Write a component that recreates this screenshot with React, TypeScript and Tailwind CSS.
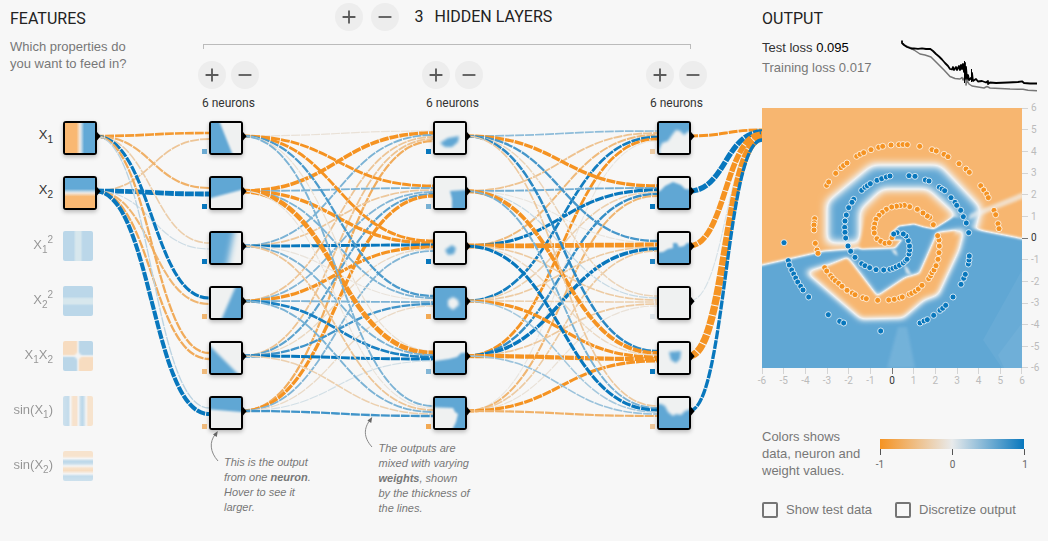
import React from "react";

type Point = [number, number];

const ROW_Y = [136, 191, 246, 301, 356, 411];

/* Rows are source nodes, columns are destination nodes. */
const INPUT_WEIGHTS = [
  [-0.92, -0.65, -0.32, 1.2, -0.72, 0.2],
  [-0.42, 2.1, 0.12, -0.6, -0.72, 1.7],
];

const HIDDEN_WEIGHTS_1 = [
  [-0.1, -1.0, -1.05, 0.7, -0.12, 0.48],
  [-1.5, 0.48, -1.3, 0.48, -2.1, -0.08],
  [0.48, -0.4, 1.1, -0.08, 0.48, -0.42],
  [-0.42, 0.45, -1.25, 0.48, 0.92, 0.48],
  [-0.45, 0.62, -0.2, 0.75, 1.1, -0.3],
  [-0.7, -1.3, 0.45, -0.18, 0.1, 0.75],
];

const HIDDEN_WEIGHTS_2 = [
  [0.4, -1.3, 0.72, -0.25, 0.85, -0.38],
  [-0.45, 0.52, -0.06, 0.15, -1.6, 0.5],
  [-0.55, 1.2, -2.1, -0.36, -0.2, 1.2],
  [0.95, -0.3, -0.36, -0.3, -1.2, 0.3],
  [-1.0, 0.8, 1.4, -0.38, -1.8, 0.35],
  [-0.06, -0.6, -0.36, -0.1, -1.2, -0.65],
];

const OUTPUT_WEIGHTS = [[-1.1], [2.4], [-2.5], [0.08], [-3.5], [1.3]];

function weightColor(w: number) {
  const t = Math.min(1, Math.abs(w));
  const from = [232, 234, 235];
  const to = w < 0 ? [245, 147, 34] : [8, 119, 189];
  const c = from.map((v, i) => Math.round(v + (to[i] - v) * t));
  return `rgb(${c[0]},${c[1]},${c[2]})`;
}

function LinkGroup({ x1, x2, weights, targets }: { x1: number; x2: number; weights: number[][]; targets: number[] }) {
  const n = weights.length;
  const mid = (x1 + x2) / 2;
  return (
    <g fill="none" strokeDasharray="9 1">
      {targets.map((ty, j) =>
        weights.map((row, i) => {
          const y1 = ROW_Y[i];
          const y2 = ty + ((i - (n - 1) / 2) / n) * 12;
          return (
            <path
              key={`${i}-${j}`}
              d={`M${x1},${y1}C${mid},${y1} ${mid},${y2} ${x2},${y2}`}
              stroke={weightColor(row[j])}
              strokeWidth={1 + 1.8 * Math.abs(row[j])}
            />
          );
        })
      )}
    </g>
  );
}

function Links() {
  return (
    <svg className="pointer-events-none absolute inset-0" width="762" height="541">
      <LinkGroup x1={95} x2={209} weights={INPUT_WEIGHTS} targets={ROW_Y} />
      <LinkGroup x1={241} x2={433} weights={HIDDEN_WEIGHTS_1} targets={ROW_Y} />
      <LinkGroup x1={465} x2={657} weights={HIDDEN_WEIGHTS_2} targets={ROW_Y} />
      <LinkGroup x1={689} x2={762} weights={OUTPUT_WEIGHTS} targets={[135]} />
    </svg>
  );
}

/* Grey levels 0..1 are mapped onto orange, off-white and blue. */
function Filters() {
  return (
    <svg className="absolute" width="0" height="0">
      <defs>
        <filter id="scale" x="0" y="0" width="100%" height="100%" colorInterpolationFilters="sRGB">
          <feComponentTransfer>
            <feFuncR type="table" tableValues="0.97 0.941 0.38" />
            <feFuncG type="table" tableValues="0.716 0.949 0.655" />
            <feFuncB type="table" tableValues="0.44 0.949 0.832" />
          </feComponentTransfer>
        </filter>
        {[1, 1.6, 3, 5].map((s, i) => (
          <filter key={s} id={`soft${i}`} x="-40%" y="-40%" width="180%" height="180%" colorInterpolationFilters="sRGB">
            <feGaussianBlur stdDeviation={s} />
          </filter>
        ))}
      </defs>
    </svg>
  );
}

type Shape = { d: string; soft: number; v?: string };
type Neuron = { base: string; shapes: Shape[]; bias: number };

const MID = "#808080";

const LAYERS: Neuron[][] = [
  [
    { base: MID, bias: 0.55, shapes: [{ d: "M-9,-9H6L9,0L21,30L25,39H-9Z", soft: 0 }] },
    { base: MID, bias: 1, shapes: [{ d: "M-9,-9H39V9L30,12L0,20L-9,23Z", soft: 0 }] },
    { base: MID, bias: 1, shapes: [{ d: "M-9,-9H25L23,0L17,30L15,39H-9Z", soft: 2 }] },
    { base: MID, bias: -0.6, shapes: [{ d: "M39,-9H27L24,0L11,30L7,39H39Z", soft: 1 }] },
    { base: MID, bias: -0.55, shapes: [{ d: "M-9,-5L0,4L26,30L35,39H-9Z", soft: 1 }] },
    { base: MID, bias: -0.55, shapes: [{ d: "M-9,-9H39V15L30,14L0,11.5L-9,11Z", soft: 0 }] },
  ],
  [
    { base: MID, bias: 1, shapes: [{ d: "M5,20L13,15L24,13L23,19L17,24L10,24Z", soft: 1 }] },
    { base: MID, bias: 0.5, shapes: [{ d: "M15,13L30,12H39V39H17L17,21Z", soft: 0 }] },
    { base: MID, bias: 1, shapes: [{ d: "M10,17L17,12L21,15L19,21L13,22Z", soft: 1 }] },
    { base: "#fff", bias: -0.75, shapes: [{ d: "M13,12L18,9L23,12L24,17L18,22L13,18Z", soft: 1, v: MID }] },
    { base: MID, bias: 0.45, shapes: [{ d: "M-9,18L0,18L14,16L22,14L26,10L39,9V39H-9Z", soft: 0 }] },
    { base: "#fff", bias: -0.75, shapes: [{ d: "M-9,9L18,10L20,14L23,16L21,24L18,30L15,39H-9Z", soft: 0, v: MID }] },
  ],
  [
    { base: "#fff", bias: -0.35, shapes: [{ d: "M0,27L3,20L9,18L13,12L17,7L21,8L25,12L30,8L39,8V39H3Z", soft: 1, v: MID }] },
    { base: MID, bias: 1, shapes: [{ d: "M-9,14L1,13L6,8L14,4L22,7L26,11L39,12V39H-9Z", soft: 0 }] },
    { base: MID, bias: 0.9, shapes: [{ d: "M-9,20L4,19L9,16L14,15L14,10L18,10L20,14L25,13L28,10H39V39H-9Z", soft: 0 }] },
    { base: MID, bias: 0.05, shapes: [] },
    { base: MID, bias: 1, shapes: [{ d: "M10,9L22,8L21,16L17,20L12,17Z", soft: 1 }] },
    { base: MID, bias: -0.4, shapes: [{ d: "M-9,6H2L6,8L9,14L14,18L17,16L22,17L26,13L39,9V39H-9Z", soft: 1 }] },
  ],
];

function NodeCanvas({ neuron }: { neuron: Neuron }) {
  return (
    <svg width="30" height="30" viewBox="0 0 30 30" className="block">
      <g filter="url(#scale)">
        <rect width="30" height="30" fill={neuron.base} />
        <svg width="30" height="30" overflow="hidden">
          {neuron.shapes.map((s) => (
            <path key={s.d} d={s.d} fill={s.v ?? "#fff"} filter={`url(#soft${s.soft})`} />
          ))}
        </svg>
      </g>
    </svg>
  );
}

function NodeBox({ children }: { children: React.ReactNode }) {
  return (
    <div className="relative h-[34px] w-[34px] rounded-[3px] border-2 border-black bg-black shadow-[0_2px_4px_rgba(0,0,0,0.25)]">
      {children}
      <svg className="absolute top-[9px] left-[31px]" width="5" height="9" viewBox="0 0 5 9">
        <path d="M0,0H1L4.6,4.3L1,8.5H0Z" fill="#000" />
      </svg>
    </div>
  );
}

const BLUE = "bg-[#61a8d5]";
const FEATURES: { label: React.ReactNode; active?: boolean; fill: string }[] = [
  { label: <>X<Sub>1</Sub></>, active: true, fill: "bg-[linear-gradient(90deg,#f9b872_38%,#f0e4d8_49%,#d5e2ea_53%,#62a9d6_64%)]" },
  { label: <>X<Sub>2</Sub></>, active: true, fill: "bg-[linear-gradient(180deg,#62a9d6_36%,#d5e2ea_47%,#f0e4d8_51%,#f9b872_62%)]" },
  { label: <>X<Sub>1</Sub><Sup>2</Sup></>, fill: "bg-[linear-gradient(90deg,#62a9d6_35%,#a9d0e0_43%,#a9d0e0_58%,#62a9d6_66%)]" },
  { label: <>X<Sub>2</Sub><Sup>2</Sup></>, fill: "bg-[linear-gradient(180deg,#62a9d6_35%,#a9d0e0_43%,#a9d0e0_58%,#62a9d6_66%)]" },
  { label: <>X<Sub>1</Sub>X<Sub>2</Sub></>, fill: BLUE },
  { label: <>sin(X<Sub>1</Sub>)</>, fill: "bg-[linear-gradient(90deg,#8fc0df_0%,#79b4da_18%,#f0f2f2_25%,#f9c58e_33%,#f9c590_45%,#f0f2f2_51%,#8fc0df_58%,#62a9d6_64%,#8fc0df_70%,#f0f2f2_77%,#f9c690_84%,#f9c690_100%)]" },
  { label: <>sin(X<Sub>2</Sub>)</>, fill: "bg-[linear-gradient(180deg,#f9c690_0%,#f9c690_17%,#f0f2f2_25%,#8fc0df_31%,#62a9d6_36%,#8fc0df_43%,#f0f2f2_50%,#f9c58e_57%,#f9b872_65%,#f0f2f2_76%,#79b4da_84%,#8fc0df_100%)]" },
];

function Sub({ children }: { children: React.ReactNode }) {
  return <span className="relative top-[4px] text-[10px]">{children}</span>;
}

function Sup({ children }: { children: React.ReactNode }) {
  return <span className="relative top-[-6px] text-[10px]">{children}</span>;
}

function RoundButton({ minus }: { minus?: boolean }) {
  return (
    <button className="flex h-7 w-7 items-center justify-center rounded-full bg-[#ededed]">
      <svg width="22" height="22" viewBox="0 0 24 24" fill="#5a5a5a">
        <path d={minus ? "M19 13H5v-2h14v2z" : "M19 13h-6v6h-2v-6H5v-2h6V5h2v6h6v2z"} />
      </svg>
    </button>
  );
}

function Features() {
  return (
    <section className="flex w-[198px] shrink-0 flex-col">
      <div className="h-[121px] pt-[9px] pl-[10px]">
        <h2 className="font-[Roboto,sans-serif] text-[16px] leading-5 text-[#222]">FEATURES</h2>
        <p className="mt-[9px] text-[13px] leading-[17px] text-[#777]">
          Which properties do
          <br />
          you want to feed in?
        </p>
      </div>
      <div className="flex flex-col gap-[21px]">
        {FEATURES.map((f, i) => (
          <div key={i} className={f.active ? "flex h-[34px] gap-[10px]" : "flex h-[34px] gap-[10px] opacity-40"}>
            <div className={f.active ? "w-[53px] pt-[4px] text-right text-[13px] leading-5 whitespace-nowrap text-[#333]" : "w-[53px] pt-[4px] text-right text-[13px] leading-5 whitespace-nowrap text-black"}>
              {f.label}
            </div>
            {f.active ? (
              <NodeBox>
                <div className={`h-[30px] w-[30px] ${f.fill}`} />
              </NodeBox>
            ) : i === 4 ? (
              <svg width="30" height="30" viewBox="0 0 30 30" className="rounded-[2px]">
                <g filter="url(#scale)">
                  <rect width="30" height="30" fill="#fff" />
                  <svg width="30" height="30" overflow="hidden">
                    <path d="M-5,-5H15V15H-5ZM15,15H35V35H15Z" fill="#000" filter="url(#soft0)" />
                    <circle cx="15" cy="15" r="3" fill="#808080" filter="url(#soft0)" />
                  </svg>
                </g>
              </svg>
            ) : (
              <div className={`h-[30px] w-[30px] rounded-[2px] ${f.fill}`} />
            )}
          </div>
        ))}
      </div>
    </section>
  );
}

function HiddenLayer({ neurons, last }: { neurons: Neuron[]; last?: boolean }) {
  return (
    <div className={last ? "w-[116px] shrink-0" : "w-[224px] shrink-0"}>
      <div className="flex gap-[5px]">
        <RoundButton />
        <RoundButton minus />
      </div>
      <div className="h-[32px] pt-[6px] pl-[4px] font-[Roboto,sans-serif] text-[12px] leading-4 text-[#333]">6 neurons</div>
      <div className="flex flex-col gap-[21px] pl-[11px]">
        {neurons.map((n, i) => (
          <NodeBox key={i}>
            <NodeCanvas neuron={n} />
            <span className="absolute top-[26px] left-[-9px] h-[5px] w-[5px]" style={{ backgroundColor: weightColor(n.bias) }} />
          </NodeBox>
        ))}
      </div>
    </div>
  );
}

function HiddenLayers() {
  return (
    <section className="flex w-[564px] shrink-0 flex-col">
      <div className="flex h-[44px] items-start pt-[3px] pl-[137px]">
        <RoundButton />
        <div className="w-[8px]" />
        <RoundButton minus />
        <div className="flex gap-[11px] pt-[4px] pl-[15.5px] font-[Roboto,sans-serif] text-[16px] leading-5 text-[#222]">
          <span>3</span>
          <h2>HIDDEN LAYERS</h2>
        </div>
      </div>
      <div className="mb-[12px] ml-[5px] h-[5px] w-[488px] border-x border-t border-[#bbb]" />
      <div className="flex">
        {LAYERS.map((neurons, i) => (
          <HiddenLayer key={i} neurons={neurons} last={i === 2} />
        ))}
      </div>
    </section>
  );
}

const ORANGE_POINTS: Point[] = [
  [64.7, 77.3], [66.7, 74], [73.7, 65.3], [79, 59.7], [81.5, 57.5], [85, 55], [94.7, 48.3], [98, 46.3], [101.7, 44.7], [109, 41.7],
  [116.7, 39.3], [120.7, 38.3], [129, 37], [137, 36.7], [141, 36.5], [145.3, 36.7], [157.7, 38.3], [170, 41.7], [174.3, 43],
  [182, 46.3], [186, 48.7], [197, 55.7], [204, 61], [207.3, 64.3], [218.7, 77.7], [221.7, 82], [224.7, 86], [226.3, 89.7],
  [232, 102.3], [233.7, 106.7], [236, 115.7], [237, 120.7], [52.7, 110.7], [52.3, 114.7], [52, 117], [52, 122], [53.3, 135.3],
  [55, 142], [56, 145.3], [62.7, 159.7], [64.7, 163], [68.7, 167.7], [70.7, 170.3], [73.3, 172.7], [76.7, 175.3], [80, 178.3],
  [85, 182.3], [90.3, 185], [93, 186.7], [101, 189.7], [104.3, 190.7], [115.7, 192.3], [126.7, 192], [132.3, 191.3],
  [137.7, 190], [140.3, 189], [147.3, 186.3], [149.7, 185.3], [153.3, 183.3], [156.3, 181], [160, 177.3], [166.7, 170.7],
  [168.7, 167.7], [170, 164.7], [172, 162], [174, 157.7], [176, 151.3], [177, 144.7], [177.3, 138], [177, 132], [175.7, 127.7],
  [171.3, 116.7], [167.7, 109.3], [165.3, 108], [161, 105], [155.3, 101.3], [147.7, 98.7], [142.3, 97.3], [138, 97.7],
  [134.5, 98.2], [129.7, 99], [124.3, 101.3], [120.3, 104.3], [117, 107.3], [114, 111.3], [112.7, 116], [112, 120.3],
  [112.3, 125], [115, 130.7], [118.7, 133.3], [123, 135.3], [127.3, 134.7], [130, 129.7],
];

const BLUE_POINTS: Point[] = [
  [99.7, 82.3], [103, 79.3], [105.3, 77.7], [108.3, 75.7], [115, 72.3], [119.7, 70.7], [124.3, 69], [128, 68], [147, 67.7],
  [153, 68.3], [163.3, 72], [167, 73], [177.3, 79.3], [180, 81], [182.7, 82.7], [189, 89.7], [193, 94.3], [194.7, 97.3],
  [198.7, 102.3], [201.3, 108.7], [204.3, 115], [206.7, 124.7], [91.7, 91.3], [90, 94.3], [86.7, 99.7], [84.3, 107], [83, 113],
  [82.7, 119.3], [83, 124.3], [83.7, 130], [86, 138], [88.7, 143.3], [93, 149.3], [99.7, 155.7], [103, 157.7], [107.7, 159.7],
  [114, 161.7], [121.7, 162], [128, 161.3], [131, 160.3], [134, 159], [137.5, 157.3], [141.3, 155], [143.5, 153], [145, 151.3],
  [147, 146], [147.7, 142], [147.5, 138], [146.3, 132.7], [144, 128], [141.3, 126], [135, 124.7], [131.7, 126], [22, 134.7],
  [26.3, 152.7], [27.3, 157], [29.7, 162], [31.7, 166], [33.7, 170], [35.7, 174], [38.7, 178.3], [41, 182], [46.7, 189],
  [66.3, 206.7], [77.7, 213.3], [81.7, 215], [118.7, 223], [158, 215], [162, 213], [165.3, 211.7], [171.7, 207.3],
  [178, 202.3], [180.7, 200.3], [183.7, 197.3], [191, 189], [199, 176.3], [201.7, 170.3], [203.3, 166.3], [206.3, 156],
  [207, 152], [207.3, 148],
];

const TICKS = [-6, -5, -4, -3, -2, -1, 0, 1, 2, 3, 4, 5, 6];

function HeatMap() {
  return (
    <svg width="286" height="284" viewBox="0 0 286 284" className="block overflow-visible">
      <svg width="260" height="260" overflow="hidden">
        <g filter="url(#scale)">
          <rect width="260" height="260" fill="#000" />
          {/* outer ring */}
          <path d="M65,150V94L110,57H178L219,100L210,135H65Z" fill="#fff" filter="url(#soft3)" />
          <path d="M208,106L262,84V90L206,112Z" fill="#808080" opacity="0.7" filter="url(#soft1)" />
          {/* inside of the ring */}
          <path d="M98,150V102L120,81H166L195,108L176,124H150V150Z" fill="#000" filter="url(#soft3)" />
          {/* lower half */}
          <path d="M-10,159L0,157L62,143L90,141L205,119L212,121L262,131L272,133V272H-10Z" fill="#fff" filter="url(#soft1)" />
          <path d="M97,140L104,108H162L176,118L168,122L150,117H136L130,122L128,129L141,130L133,140L100,141Z" fill="#000" filter="url(#soft1)" />
          {/* centre */}
          <path d="M128,126L137,118L152,116L162,119L172,121L192,109L204,112L209,122L174,126L165,145L143,150L138,140L141,132L131,132Z" fill="#fff" filter="url(#soft0)" />
          {/* lower crescent */}
          <path d="M44,164L86,151L98,167L115,190L143,171L158,167L168,145L176,126L202,122L197,142L176,187L162,192L141,210L99,211Z" fill="#000" filter="url(#soft2)" />
          <path d="M56,164L85,150L115,189L144,170L158,166L176,125L194,123L168,178L138,193L102,194Z" fill="#000" filter="url(#soft1)" />
          <path d="M129,141L134,142L136,148L132,146ZM142,157L146,160L150,168L144,165Z" fill="#999" filter="url(#soft0)" />
        </g>
        <path d="M136,219H145L153,260H125Z" fill="#fff" opacity="0.12" filter="url(#soft1)" />
        <path d="M260,162L221,232L240,260H260Z" fill="#fff" opacity="0.05" />
        <path d="M260,215L236,247L242,260H260Z" fill="#fff" opacity="0.05" />
      </svg>
      <g stroke="#fff" strokeOpacity="0.75" strokeWidth="1">
        {ORANGE_POINTS.map(([x, y]) => (
          <circle key={`${x},${y}`} cx={x} cy={y} r="3" fill="#f59322" />
        ))}
        {BLUE_POINTS.map(([x, y]) => (
          <circle key={`${x},${y}`} cx={x} cy={y} r="3" fill="#0877bd" />
        ))}
      </g>
      <g className="font-[Roboto,sans-serif] text-[10px]">
        {TICKS.map((t) => {
          const x = 130 + (t * 260) / 12;
          const y = 130 - (t * 260) / 12;
          const sx = Math.min(259.5, Math.floor(x) + 0.5);
          const sy = Math.min(259.5, Math.floor(y) + 0.5);
          return (
            <g key={t} fill={t === 0 ? "#333" : "#bbb"}>
              <path d={`M${sx},260v6M260,${sy}h6`} stroke={t === 0 ? "#777" : "#d4d4d4"} />
              <text x={x} y="276" textAnchor="middle">{t}</text>
              <text x="269" y={y + 3.2}>{t}</text>
            </g>
          );
        })}
      </g>
    </svg>
  );
}

function LossChart() {
  return (
    <svg width="138" height="54" viewBox="0 0 138 54" fill="none" strokeLinejoin="round">
      <path
        stroke="#777"
        strokeWidth="1.5"
        d="M2,4L6,7L10,8.5L14,11L20,15L25,16L31,18L38,25L44,31L50,37.5L55,39.5L60,40L62,38.5L63,41L65,38L66,42V46L67,41L69,45L72,47L78,48L84,49L87,47.5L90,49L110,50L123,50.3L128,51.3L137,51.7"
      />
      <path
        stroke="#000"
        strokeWidth="1.8"
        d="M2,1.5V4L4,6L7,8L11,9.5L14,9.3L18,9.8L22,9.4L26,10L30,9.8L33,12L36,15L39,17.5L42,20.5L45,24L48,27L50,30L52,30.5L53,28L54,31L56,28L57,31L59,27L60,31L61,26L62,30L63,25L64,33L65,24V40L66,28L67,40L68,36L69,41L71,39L72,41V34L73,42L76,40L78,42.5L82,42L86,43.5L88,42V45L90,43.5L96,44L108,43.5L118,43L122,42.3L124,44L130,44.5H137"
      />
      <path stroke="#000" strokeWidth="1" d="M64.5,22V44M71.5,30V43" />
    </svg>
  );
}

function CheckOption({ children }: { children: React.ReactNode }) {
  return (
    <label className="flex items-center gap-2">
      <span className="h-4 w-4 rounded-[2px] border-2 border-[#757575]" />
      <span className="text-[13px] leading-4 whitespace-nowrap text-[#777]">{children}</span>
    </label>
  );
}

function Output() {
  return (
    <section className="flex w-[286px] shrink-0 flex-col">
      <h2 className="h-[38px] pt-[9px] font-[Roboto,sans-serif] text-[16px] leading-5 text-[#222]">OUTPUT</h2>
      <div className="flex h-[70px]">
        <div className="w-[138px] text-[13px] leading-5 whitespace-nowrap">
          <div className="text-[#333]">Test loss <span className="text-black">0.095</span></div>
          <div className="text-[#777]">Training loss 0.017</div>
        </div>
        <div className="pt-[1px]">
          <LossChart />
        </div>
      </div>
      <HeatMap />
      <div className="mt-[36px] flex h-[74px]">
        <p className="w-[118px] text-[13px] leading-[17px] text-[#777]">
          Colors shows
          <br />
          data, neuron and
          <br />
          weight values.
        </p>
        <div className="w-[145px] pt-[11px]">
          <div className="h-[10px] w-[144px] bg-[linear-gradient(90deg,#f59322,#e8eaeb,#0877bd)]" />
          <div className="flex h-[6px] w-[145px] justify-between">
            <span className="w-px bg-[#555]" />
            <span className="w-px bg-[#555]" />
            <span className="w-px bg-[#555]" />
          </div>
          <div className="-mx-[10px] flex justify-between pt-[4px] text-center font-[Roboto,sans-serif] text-[10px] leading-[12px] text-[#666]">
            <span className="w-5">-1</span>
            <span className="w-5">0</span>
            <span className="w-5">1</span>
          </div>
        </div>
      </div>
      <div className="flex gap-[23px]">
        <CheckOption>Show test data</CheckOption>
        <CheckOption>Discretize output</CheckOption>
      </div>
    </section>
  );
}

function Callouts() {
  return (
    <>
      <svg className="pointer-events-none absolute inset-0" width="762" height="541" fill="none" stroke="#888">
        <path d="M218,461C210,452 209,442 215.5,434" />
        <path d="M217.8,431L216.8,437L213,434.5Z" fill="#666" stroke="none" />
        <path d="M372,447C363,437 364,428 370,420" />
        <path d="M372.2,417L371.2,423L367.4,420.5Z" fill="#666" stroke="none" />
      </svg>
      <p className="absolute top-[455px] left-[224px] text-[11px] leading-[15px] whitespace-nowrap text-[#777] italic">
        This is the output
        <br />
        from one <b>neuron</b>.
        <br />
        Hover to see it
        <br />
        larger.
      </p>
      <p className="absolute top-[441px] left-[378.5px] text-[11px] leading-[15px] whitespace-nowrap text-[#777] italic">
        The outputs are
        <br />
        mixed with varying
        <br />
        <b>weights</b>, shown
        <br />
        by the thickness of
        <br />
        the lines.
      </p>
    </>
  );
}

export default function App() {
  return (
    <main className="relative flex h-[541px] w-[1048px] overflow-hidden bg-[#f7f7f7] font-['Liberation_Sans',Arial,sans-serif]">
      <Filters />
      <Links />
      <Features />
      <HiddenLayers />
      <Output />
      <Callouts />
    </main>
  );
}
